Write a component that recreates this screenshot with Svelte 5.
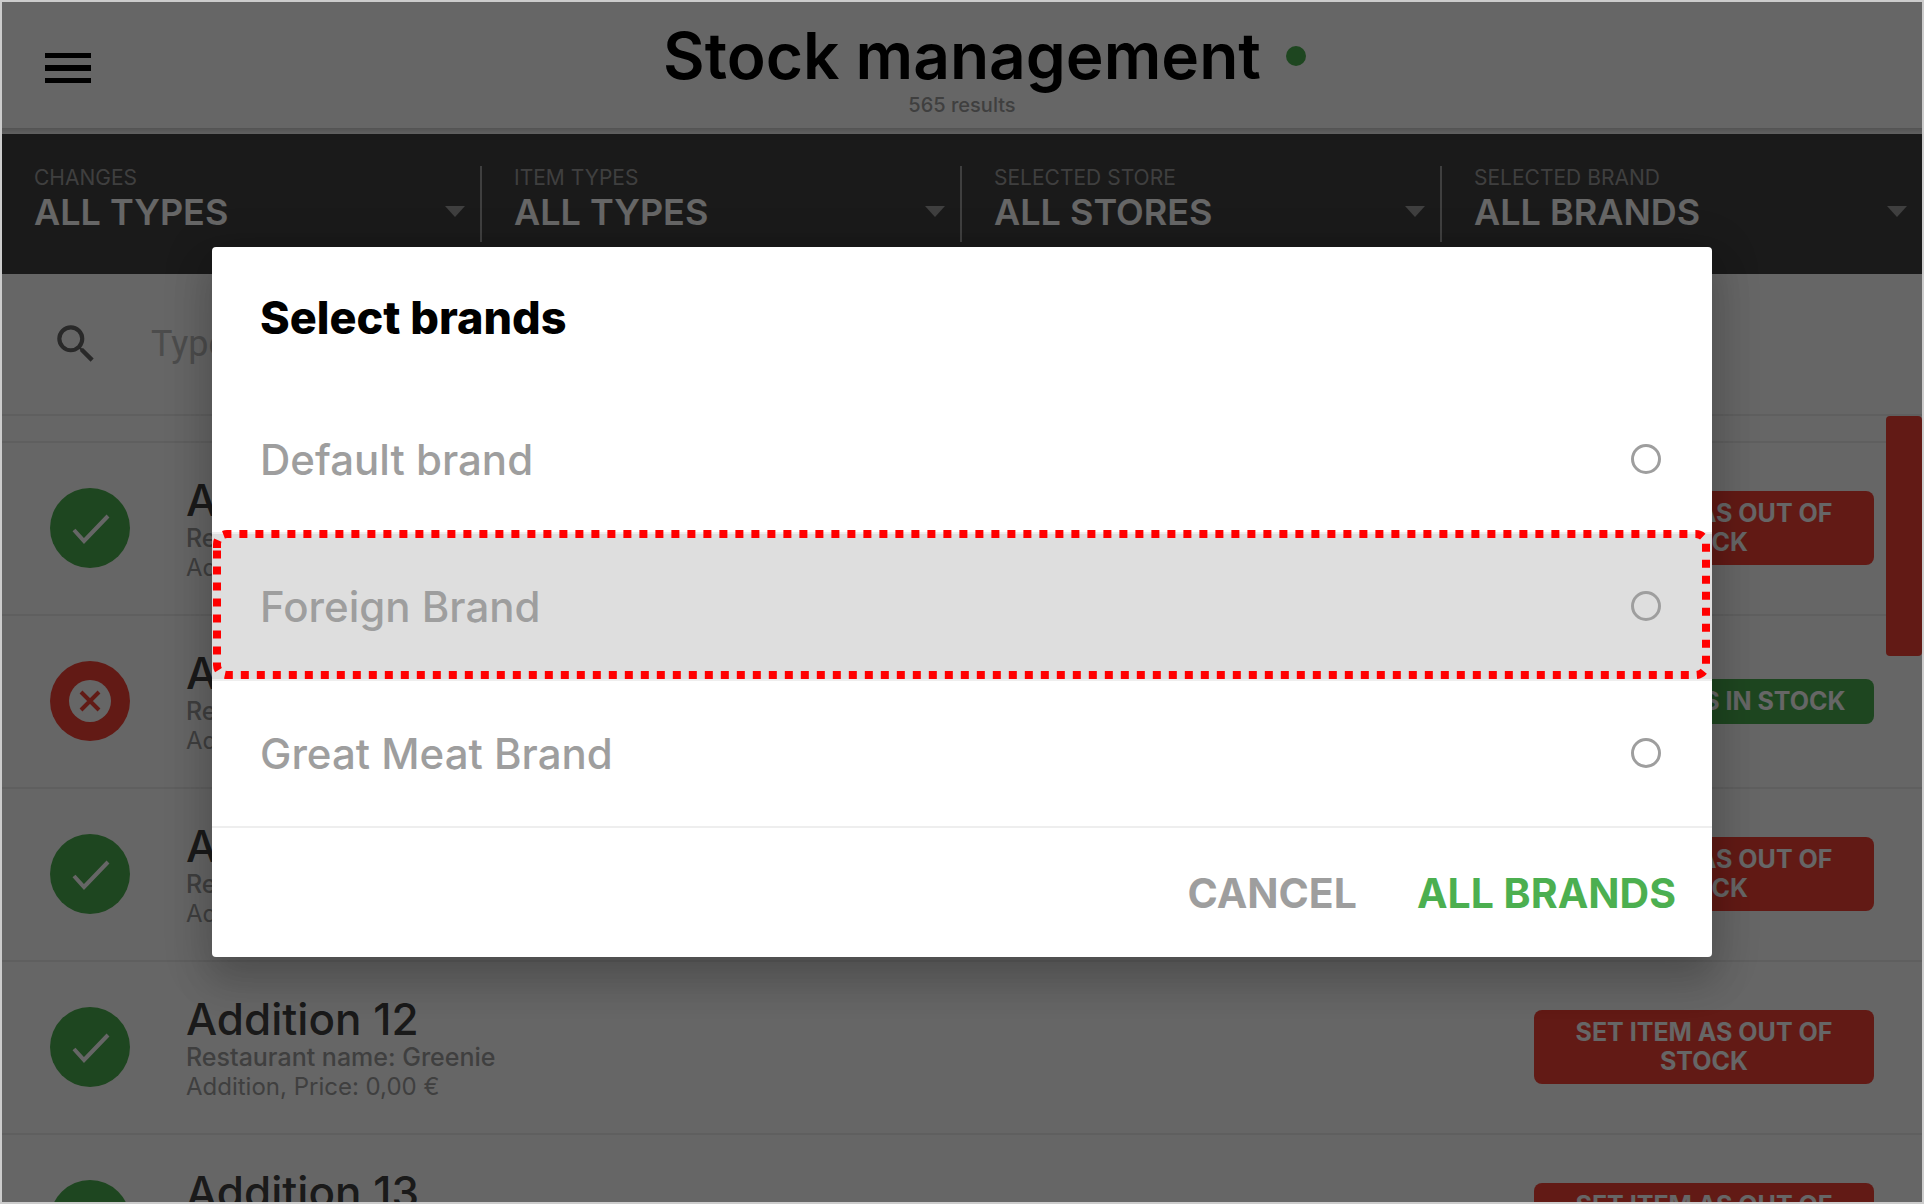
<script>
  const filters = [
    { id: 'changes', label: 'CHANGES', value: 'ALL TYPES' },
    { id: 'item-types', label: 'ITEM TYPES', value: 'ALL TYPES' },
    { id: 'store', label: 'SELECTED STORE', value: 'ALL STORES' },
    { id: 'brand', label: 'SELECTED BRAND', value: 'ALL BRANDS' }
  ];

  const items = [
    { name: 'Addition 1', inStock: true },
    { name: 'Addition 10', inStock: false },
    { name: 'Addition 11', inStock: true },
    { name: 'Addition 12', inStock: true },
    { name: 'Addition 13', inStock: true }
  ];

  const brands = [
    { name: 'Default brand', focused: false },
    { name: 'Foreign Brand', focused: true },
    { name: 'Great Meat Brand', focused: false }
  ];

  let selected = $state('');
  let dialogWidth = $state(1500);

  // Rounded outline of the focused row; it starts on the left edge and runs clockwise.
  function outline(width) {
    const left = 5;
    const right = width - 6;
    const top = 4;
    const bottom = 145;
    const r = 10;
    return `M${left} 18V${top + r}a${r} ${r} 0 0 1 ${r} -${r}H${right - r}a${r} ${r} 0 0 1 ${r} ${r}V${bottom - r}a${r} ${r} 0 0 1 -${r} ${r}H${left + r}a${r} ${r} 0 0 1 -${r} -${r}Z`;
  }
</script>

<div class="app">
  <header class="top">
    <button class="menu" aria-label="Menu">
      <svg width="46" height="30" viewBox="0 0 46 30"><path d="M0 0h46v5H0zM0 12h46v6H0zM0 25h46v5H0z" /></svg>
    </button>
    <div class="heading">
      <h1>Stock management</h1>
      <p>565 results</p>
    </div>
    <span class="status"></span>
  </header>

  <div class="filters">
    {#each filters as filter}
      <div class="filter">
        <label for={filter.id}>{filter.label}</label>
        <select id={filter.id}><option>{filter.value}</option></select>
        <svg class="arrow" width="20" height="11" viewBox="0 0 20 11"><path d="M0 0h20L10 11z" /></svg>
      </div>
    {/each}
  </div>

  <div class="search">
    <svg width="50" height="50" viewBox="0 0 24 24"><path d="M15.5 14h-.79l-.28-.27A6.47 6.47 0 0 0 16 9.5 6.5 6.5 0 1 0 9.5 16c1.61 0 3.09-.59 4.23-1.57l.27.28v.79l5 4.99L20.49 19l-4.99-5zm-6 0a4.5 4.5 0 1 1 0-9 4.5 4.5 0 0 1 0 9z" /></svg>
    <input type="text" placeholder="Type to search" aria-label="Search" />
  </div>

  <main class="list">
    <div class="spacer"></div>
    {#each items as item}
      <article class="item">
        <span class="badge" class:out={!item.inStock}>
          {#if item.inStock}
            <svg width="80" height="80" viewBox="0 0 80 80"><path d="M24 42l10 11 24-25" fill="none" stroke="#fff" stroke-width="4" /></svg>
          {:else}
            <svg width="80" height="80" viewBox="0 0 80 80"><circle cx="40" cy="40" r="21" fill="#fff" /><path d="M31 31l18 18M49 31l-18 18" stroke="#f44336" stroke-width="4" /></svg>
          {/if}
        </span>
        <div class="info">
          <h2>{item.name}</h2>
          <p class="restaurant">Restaurant name: Greenie</p>
          <p>Addition, Price: 0,00 €</p>
        </div>
        <button class="toggle" class:in={!item.inStock}>
          {item.inStock ? 'SET ITEM AS OUT OF STOCK' : 'SET ITEM AS IN STOCK'}
        </button>
      </article>
    {/each}
    <span class="thumb"></span>
  </main>

  <div class="backdrop">
    <div class="dialog" role="dialog" aria-modal="true" aria-labelledby="dialog-title" bind:clientWidth={dialogWidth}>
      <h2 id="dialog-title">Select brands</h2>
      {#each brands as brand}
        <label class="option" class:focused={brand.focused}>
          <span>{brand.name}</span>
          <input type="radio" name="brand-choice" value={brand.name} bind:group={selected} />
          {#if brand.focused}
            <svg class="outline" width="100%" height="149"><path d={outline(dialogWidth)} /></svg>
          {/if}
        </label>
      {/each}
      <footer>
        <button>CANCEL</button>
        <button class="primary">ALL BRANDS</button>
      </footer>
    </div>
  </div>
</div>

<style>
  :global(body) {
    margin: 0;
  }
  .app,
  .app * {
    box-sizing: border-box;
  }
  .app {
    position: relative;
    display: flex;
    flex-direction: column;
    height: 100vh;
    overflow: hidden;
    border: 2px solid #ccc;
    background: #fff;
    font-family: Inter, 'Open Sans', sans-serif;
    color: #9e9e9e;
  }
  h1,
  h2,
  p {
    margin: 0;
  }
  button,
  input,
  select {
    margin: 0;
    padding: 0;
    border: 0;
    background: none;
    font: inherit;
    color: inherit;
  }
  .top {
    display: grid;
    grid-template-columns: 1fr auto 1fr;
    flex: none;
    height: 126px;
    padding: 0 43px;
  }
  .menu {
    justify-self: start;
    align-self: start;
    padding-top: 51px;
  }
  .menu svg,
  .arrow,
  .badge svg {
    display: block;
  }
  .heading {
    padding-top: 18px;
    text-align: center;
  }
  h1 {
    color: #000;
    font-size: 64px;
    font-weight: 600;
    line-height: 72px;
  }
  .heading p {
    font-size: 20px;
    font-weight: 500;
    line-height: 26px;
  }
  .status {
    width: 20px;
    height: 20px;
    margin: 44px 0 0 25px;
    border-radius: 50%;
    background: #4caf50;
  }
  .filters {
    display: grid;
    grid-template-columns: repeat(4, 1fr);
    flex: none;
    height: 146px;
    padding: 38px 0 32px;
    background: linear-gradient(#d0d0d0, #f4f4f4 6px, #424242 6px);
  }
  .filter {
    position: relative;
    padding: 0 48px 0 32px;
    border-right: 2px solid #9e9e9e;
  }
  .filter:last-child {
    border-right: 0;
  }
  .filter label {
    display: block;
    font-size: 21px;
    line-height: 24px;
  }
  .filter select {
    display: block;
    width: 100%;
    height: 44px;
    appearance: none;
    color: #fff;
    font-size: 36px;
    font-weight: 600;
  }
  .arrow {
    position: absolute;
    top: 40px;
    right: 15px;
    fill: #9e9e9e;
    pointer-events: none;
  }
  .search {
    display: flex;
    align-items: center;
    gap: 50px;
    flex: none;
    height: 142px;
    padding-left: 49px;
    border-bottom: 2px solid #eee;
    fill: #666;
  }
  .search input {
    flex: 1;
    font-family: Roboto, sans-serif;
    font-size: 36px;
  }
  .search input::placeholder {
    color: #bdbdbd;
    opacity: 1;
  }
  .list {
    position: relative;
    flex: 1;
    min-height: 0;
    overflow: hidden;
  }
  .spacer {
    height: 27px;
    border-bottom: 2px solid #eee;
  }
  .item {
    display: flex;
    align-items: center;
    gap: 56px;
    height: 173px;
    padding: 0 48px 1px;
    border-bottom: 2px solid #eee;
  }
  .badge {
    flex: none;
    border-radius: 50%;
    background: #4caf50;
  }
  .badge.out {
    background: #f44336;
  }
  .info {
    flex: 1;
    padding-top: 2px;
    font-size: 24px;
    line-height: 29px;
  }
  .info h2 {
    color: #424242;
    font-size: 44px;
    font-weight: 500;
    line-height: 48px;
  }
  .info .restaurant {
    font-size: 25px;
    font-weight: 500;
  }
  .toggle {
    width: 340px;
    padding: 8px 24px;
    border-radius: 8px;
    background: #f44336;
    color: #fff;
    font-size: 25px;
    font-weight: 700;
    line-height: 29px;
  }
  .toggle.in {
    background: #4caf50;
  }
  .thumb {
    position: absolute;
    top: 0;
    right: 0;
    width: 36px;
    height: 240px;
    border-radius: 4px;
    background: #f44336;
  }
  .backdrop {
    position: absolute;
    inset: 0;
    z-index: 1;
    display: flex;
    align-items: center;
    justify-content: center;
    background: rgba(0, 0, 0, 0.6);
  }
  .dialog {
    width: 90%;
    max-width: 1500px;
    border-radius: 4px;
    background: #fff;
    box-shadow:
      0 24px 38px 3px rgba(0, 0, 0, 0.14),
      0 9px 46px 8px rgba(0, 0, 0, 0.12);
  }
  .dialog h2 {
    height: 140px;
    padding: 45px 48px 0;
    color: #000;
    font-size: 45px;
    font-weight: 800;
    line-height: 52px;
  }
  .option {
    position: relative;
    display: flex;
    align-items: center;
    justify-content: space-between;
    height: 147px;
    padding: 0 51px 1px 48px;
    border-bottom: 2px solid #eee;
    font-size: 42px;
    font-weight: 500;
  }
  .option.focused {
    background: #dedede;
  }
  .option input {
    width: 30px;
    height: 30px;
    appearance: none;
    border: 3px solid #9e9e9e;
    border-radius: 50%;
  }
  .option input:checked {
    background: #9e9e9e;
  }
  .outline {
    position: absolute;
    top: -4px;
    left: 0;
    pointer-events: none;
  }
  .outline path {
    fill: none;
    stroke: #f00;
    stroke-width: 8;
    stroke-dasharray: 8 8;
  }
  footer {
    display: flex;
    align-items: center;
    justify-content: flex-end;
    gap: 60px;
    height: 129px;
    padding: 0 36px;
    font-size: 41px;
    font-weight: 700;
  }
  .primary {
    color: #4caf50;
  }
</style>
